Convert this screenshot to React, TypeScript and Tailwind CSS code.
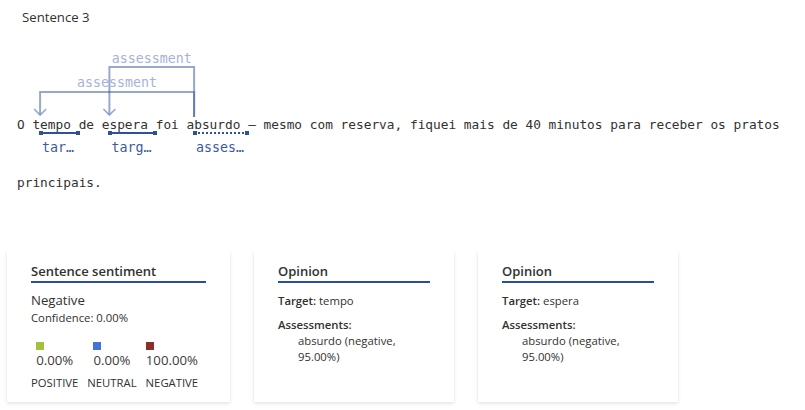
import React from 'react'

const CW = 7.7 // monospace char width

const sentence =
  'O tempo de espera foi absurdo – mesmo com reserva, fiquei mais de 40 minutos para receber os pratos'

const marks = [
  { start: 3, len: 5, label: 'tar…', dotted: false },
  { start: 12, len: 6, label: 'targ…', dotted: false },
  { start: 23, len: 7, label: 'asses…', dotted: true },
]

const mono = "font-['DejaVu_Sans_Mono',monospace]"
const ui = "font-['Open_Sans','Noto_Sans',sans-serif]"

function Arcs() {
  // x in px relative to text start, y relative to the line block top
  const from = 23 * CW
  const arcs = [
    { to: 12 * CW, y: 27, labelY: 23 },
    { to: 3 * CW, y: 52, labelY: 47 },
  ]
  return (
    <svg className="absolute left-0 top-0" width="780" height="80">
      {arcs.map((a, i) => (
        <g key={i}>
          <path
            d={`M${from} 77 L${from} ${a.y} L${a.to} ${a.y} L${a.to} 74`}
            fill="none"
            stroke="rgba(47,79,159,0.5)"
            strokeWidth="2"
          />
          <path
            d={`M${a.to - 6} 69 L${a.to} 75 L${a.to + 6} 69`}
            fill="none"
            stroke="rgba(47,79,159,0.5)"
            strokeWidth="1.6"
          />
          <text
            x={(from + a.to) / 2}
            y={a.labelY}
            textAnchor="middle"
            fill="#a6b3d6"
            fontSize="13.3"
            fontFamily="DejaVu Sans Mono, monospace"
          >
            assessment
          </text>
        </g>
      ))}
    </svg>
  )
}

function Card({ title, wide, children }: { title: string; wide?: boolean; children: React.ReactNode }) {
  return (
    <div
      className={`${wide ? 'w-[223px]' : 'w-[200px]'} h-[152px] bg-white px-6 pt-3 shadow-[0_1.6px_3.6px_0_rgba(0,0,0,0.13),0_0.3px_0.9px_0_rgba(0,0,0,0.11)]`}
    >
      <div className="border-b-2 border-[#2c4c9c] text-[13px] leading-[19px] font-semibold text-[#323130]">
        {title}
      </div>
      {children}
    </div>
  )
}

function Score({ color, value, label }: { color: string; value: string; label: string }) {
  return (
    <div className="flex flex-col items-center">
      <div className="flex flex-col">
        <div className="h-2 w-2" style={{ background: color }} />
        <div className="text-[13.2px] leading-5 text-[#3b3a39]">{value}</div>
      </div>
      <div className="mt-[5px] text-[11.3px] leading-4 text-[#323130]">{label}</div>
    </div>
  )
}

function Opinion({ target }: { target: string }) {
  return (
    <Card title="Opinion">
      <div className="mt-[10px] text-[11.3px] leading-4 text-[#323130]">
        <span className="font-semibold">Target:</span> {target}
      </div>
      <div className="mt-2 text-[11.3px] leading-4 text-[#323130]">
        <div className="font-semibold">Assessments:</div>
        <div className="pl-5">absurdo (negative, 95.00%)</div>
      </div>
    </Card>
  )
}

export default function App() {
  return (
    <div className={`w-[805px] h-[410px] bg-white ${ui}`}>
      <div className="h-10 pl-[22px] pt-[7px] text-[13.2px] leading-5 text-[#323130]">Sentence 3</div>

      <div className={`pl-[17px] ${mono} text-[12.8px] text-[#323130]`}>
        <div className="relative pt-[75px]">
          <Arcs />
          <div className="h-5 leading-5 whitespace-pre">{sentence}</div>
          <div className="relative h-[38px]">
            {marks.map((m, i) => (
              <div key={i} className="absolute -top-[3px]" style={{ left: m.start * CW, width: m.len * CW }}>
                <div
                  className={`relative h-0 border-t-2 ${m.dotted ? 'border-dotted' : 'border-solid'} border-[#2f4f9f]`}
                >
                  <div className="absolute -left-px -top-[3px] h-1 w-1 bg-[#2f4f9f]" />
                  <div className="absolute -right-px -top-[3px] h-1 w-1 bg-[#2f4f9f]" />
                </div>
                <div className="mt-[4px] pl-[2px] text-[13.3px] leading-5 text-[#3a5aa6]">{m.label}</div>
              </div>
            ))}
          </div>
        </div>
        <div className="h-5 leading-5">principais.</div>
      </div>

      <div className="mt-[57px] flex gap-6 pl-[7px]">
        <Card title="Sentence sentiment" wide>
          <div className="mt-[7px] text-[13.2px] leading-5 text-[#323130]">Negative</div>
          <div className="text-[11.3px] leading-4 text-[#323130]">Confidence: 0.00%</div>
          <div className="mt-4 flex gap-[9px]">
            <Score color="#a1c13e" value="0.00%" label="POSITIVE" />
            <Score color="#4472d8" value="0.00%" label="NEUTRAL" />
            <Score color="#8c2f2b" value="100.00%" label="NEGATIVE" />
          </div>
        </Card>
        <Opinion target="tempo" />
        <Opinion target="espera" />
      </div>
    </div>
  )
}
